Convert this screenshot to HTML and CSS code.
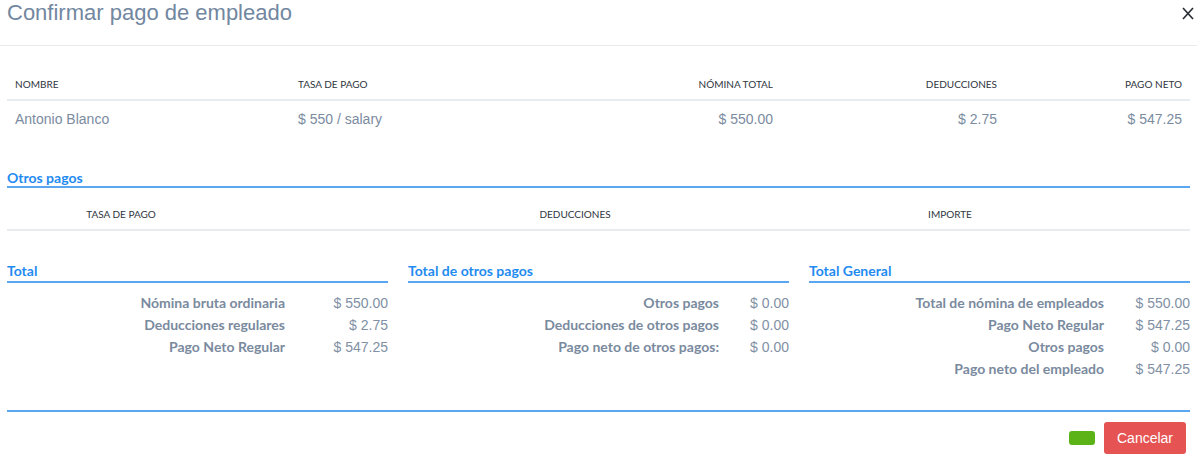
FILE: index.html
```html
<!DOCTYPE html>
<html lang="es">
<head>
<meta charset="utf-8">
<title>Confirmar pago de empleado</title>
<link rel="stylesheet" href="styles.css">
</head>
<body>
<div class="modal">
  <div class="modal-header">
    <h1 class="title">Confirmar pago de empleado</h1>
    <button class="close" aria-label="Cerrar">
      <svg width="12" height="13" viewBox="0 0 12 13"><path d="M1 1L11 12M11 1L1 12" stroke="#2b2f36" stroke-width="1.7" fill="none"/></svg>
    </button>
  </div>
  <div class="modal-body">
    <div class="emp-table">
      <div class="emp-row emp-head">
        <div class="cell">Nombre</div>
        <div class="cell">Tasa de pago</div>
        <div class="cell right">Nómina total</div>
        <div class="cell right">Deducciones</div>
        <div class="cell right">Pago neto</div>
      </div>
      <div class="emp-row emp-body">
        <div class="cell">Antonio Blanco</div>
        <div class="cell">$ 550 / salary</div>
        <div class="cell right">$ 550.00</div>
        <div class="cell right">$ 2.75</div>
        <div class="cell right">$ 547.25</div>
      </div>
    </div>

    <h2 class="section-title other-title">Otros pagos</h2>
    <div class="other-head">
      <div class="cell center">Tasa de pago</div>
      <div class="cell center">Deducciones</div>
      <div class="cell center">Importe</div>
      <div class="cell"></div>
    </div>

    <div class="summary">
      <div class="sum-block">
        <h2 class="section-title">Total</h2>
        <div class="sum-list v103">
          <div class="lbl">Nómina bruta ordinaria</div><div class="val">$ 550.00</div>
          <div class="lbl">Deducciones regulares</div><div class="val">$ 2.75</div>
          <div class="lbl">Pago Neto Regular</div><div class="val">$ 547.25</div>
        </div>
      </div>
      <div class="sum-block">
        <h2 class="section-title">Total de otros pagos</h2>
        <div class="sum-list v70">
          <div class="lbl">Otros pagos</div><div class="val">$ 0.00</div>
          <div class="lbl">Deducciones de otros pagos</div><div class="val">$ 0.00</div>
          <div class="lbl">Pago neto de otros pagos:</div><div class="val">$ 0.00</div>
        </div>
      </div>
      <div class="sum-block">
        <h2 class="section-title">Total General</h2>
        <div class="sum-list v86">
          <div class="lbl">Total de nómina de empleados</div><div class="val">$ 550.00</div>
          <div class="lbl">Pago Neto Regular</div><div class="val">$ 547.25</div>
          <div class="lbl">Otros pagos</div><div class="val">$ 0.00</div>
          <div class="lbl">Pago neto del empleado</div><div class="val">$ 547.25</div>
        </div>
      </div>
    </div>
  </div>
  <div class="modal-footer">
    <button class="btn btn-ok" aria-label="Confirmar"></button>
    <button class="btn btn-cancel">Cancelar</button>
  </div>
</div>
</body>
</html>
```

FILE: styles.css
```css
* { box-sizing: border-box; }
html, body { margin: 0; padding: 0; background: #fff; }
body { font-family: "Liberation Sans", Arial, sans-serif; width: 1197px; height: 461px; overflow: hidden; }

.modal { width: 1197px; }

.modal-header {
  height: 46px;
  border-bottom: 1px solid #e9ecef;
  display: flex;
  align-items: flex-start;
  justify-content: space-between;
  padding: 0 3px 0 7px;
}
.title {
  margin: 0;
  font-family: "Liberation Sans", Arial, sans-serif;
  font-weight: 400;
  font-size: 22px;
  line-height: 26px;
  color: #7287a0;
}
.close {
  border: 0;
  background: none;
  padding: 0;
  margin-top: 7px;
  width: 12px;
  height: 13px;
  display: flex;
}

.modal-body { padding: 24px 7px 0 7px; }

.emp-row {
  display: grid;
  grid-template-columns: 283px 250px 241px 224px 185px;
}
.cell { padding: 0 8px; }
.right { text-align: right; }
.center { text-align: center; padding: 0; }

.emp-head {
  height: 31px;
  border-bottom: 2px solid #e9ecef;
  font-family: Lato, sans-serif;
  font-size: 10px;
  text-transform: uppercase;
  color: #2f3540;
  line-height: 29px;
}
.emp-body {
  height: 37px;
  font-size: 14px;
  line-height: 36px;
  color: #7b8ba0;
}

.section-title {
  margin: 0;
  font-family: Lato, sans-serif;
  font-weight: 700;
  font-size: 14px;
  line-height: 16px;
  color: #1f8bf0;
  border-bottom: 2px solid #5aa6f0;
  padding-bottom: 0;
}
.other-title { margin-top: 32px; }

.other-head {
  display: grid;
  grid-template-columns: 228px 680px 70px 1fr;
  height: 43px;
  padding-top: 19px;
  border-bottom: 2px solid #e9ecef;
  font-family: Lato, sans-serif;
  font-size: 10px;
  text-transform: uppercase;
  color: #2f3540;
  line-height: 14px;
}

.summary {
  display: grid;
  grid-template-columns: repeat(3, 1fr);
  column-gap: 20px;
  margin-top: 32px;
  padding-bottom: 30px;
  border-bottom: 2px solid #5aa6f0;
}
.sum-block .section-title { padding-bottom: 2px; }
.sum-list {
  display: grid;
  margin-top: 9px;
  font-size: 14px;
  line-height: 22px;
}
.v103 { grid-template-columns: 1fr 103px; }
.v70 { grid-template-columns: 1fr 70px; }
.v86 { grid-template-columns: 1fr 86px; }
.lbl {
  text-align: right;
  font-family: Lato, sans-serif;
  font-weight: 700;
  color: #7a8a9e;
}
.val {
  text-align: right;
  color: #8190a4;
}

.modal-footer {
  display: flex;
  justify-content: flex-end;
  align-items: center;
  gap: 9px;
  padding: 10px 11px 0 0;
}
.btn {
  border: 0;
  border-radius: 3px;
  font-family: "Liberation Sans", Arial, sans-serif;
  cursor: pointer;
}
.btn-ok {
  width: 26px;
  height: 14px;
  background: #5bb318;
}
.btn-cancel {
  width: 82px;
  height: 32px;
  background: #e65353;
  color: #fff;
  font-size: 14px;
}
```
